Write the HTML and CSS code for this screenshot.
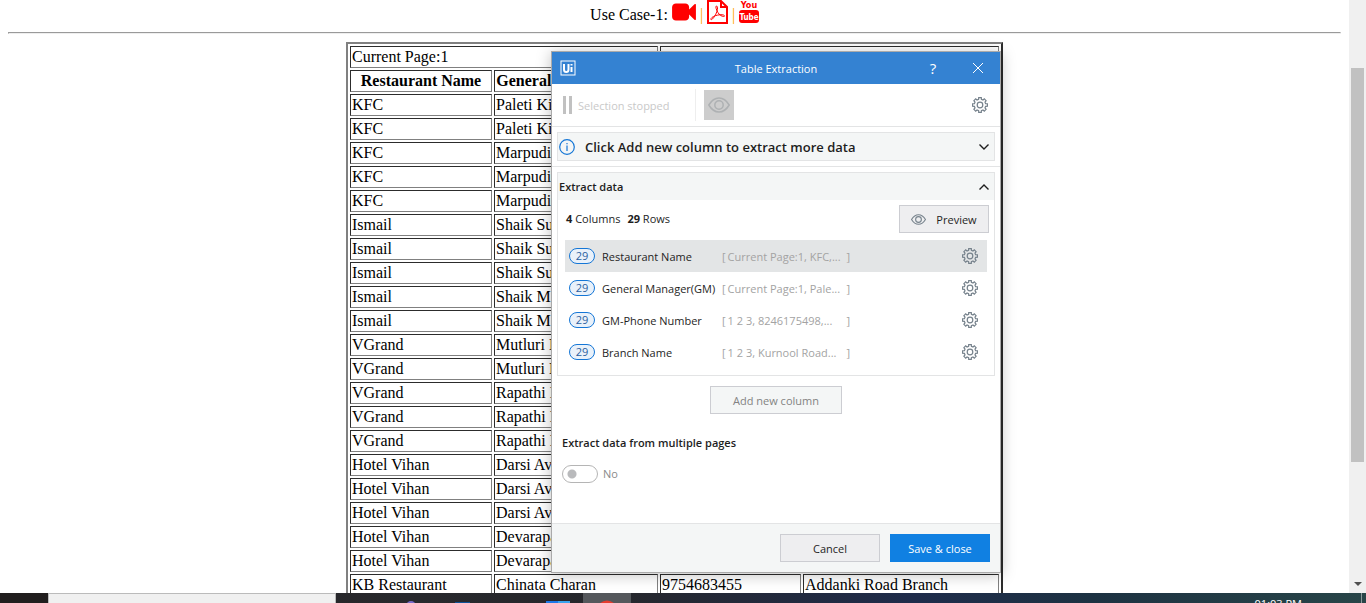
FILE: index.html
```html
<!DOCTYPE html>
<html lang="en">
<head>
<meta charset="utf-8">
<title>Table Extraction</title>
<link rel="stylesheet" href="styles.css">
</head>
<body>
<svg class="sprite" aria-hidden="true">
  <symbol id="gear" viewBox="0 0 16 16"><path d="M6.6 2.4 6.7.6H9.3L9.4 2.4 11 3 12.3 1.9 14.1 3.7 13 5 13.6 6.6 15.4 6.7V9.3L13.6 9.4 13 11 14.1 12.3 12.3 14.1 11 13 9.4 13.6 9.3 15.4H6.7L6.6 13.6 5 13 3.7 14.1 1.9 12.3 3 11 2.4 9.4.6 9.3V6.7L2.4 6.6 3 5 1.9 3.7 3.7 1.9 5 3Z"/><circle cx="8" cy="8" r="2.8"/></symbol>
  <symbol id="eye" viewBox="0 0 22 16"><path d="M.8 8Q5 1 11 1T21.2 8Q17 15 11 15T.8 8Z"/><circle cx="11" cy="8" r="4.2"/></symbol>
</svg>
<div class="screen">
  <div class="browser">
    <main class="page">
      <div class="links">
        <span>Use Case-1:</span>
        <a href="#video" aria-label="Video"><svg class="i-video" viewBox="0 144 1792 1504"><path d="M1792 352v1088q0 42-39 59-13 5-25 5-27 0-45-19l-403-403v166q0 119-84.5 203.5t-203.5 84.5h-704q-119 0-203.5-84.5t-84.5-203.5v-704q0-119 84.500-203.500t203.500-84.500h704q119 0 203.500 84.500t84.500 203.500v165l403-402q18-19 45-19 12 0 25 5 39 17 39 59z"/></svg></a>
        <span class="sep">|</span>
        <a href="#pdf" aria-label="PDF"><svg class="i-pdf" viewBox="0 0 21 24"><path d="M1 1H14L20 7V23H1ZM14 1V7H20"/><path class="thin" d="M9.500 6C8 6 9.500 11 12 14C14 16.500 17.500 17 17.500 16C17.500 14 10 14.500 6.500 16.500C3.500 18 3.300 20 4.500 19.600C7 18.500 10.500 12 10.500 8C10.500 6.800 10 6 9.500 6Z"/></svg></a>
        <span class="sep">|</span>
        <a href="#youtube" aria-label="YouTube"><svg class="i-yt" viewBox="0 0 20 25"><text class="you" x="10" y="8">You</text><rect x="0" y="10" width="20" height="13" rx="3"/><text class="tube" x="10" y="20">Tube</text></svg></a>
      </div>
      <hr>
      <table class="staff">
        <colgroup><col class="c1"><col class="c2"><col class="c3"><col class="c4"></colgroup>
        <tbody>
        <tr><td colspan="2">Current Page:1</td><td colspan="2"></td></tr>
        <tr><th>Restaurant Name</th><th>General Manager(GM)</th><th></th><th></th></tr>
        <tr><td>KFC</td><td>Paleti Ki</td><td></td><td></td></tr>
        <tr><td>KFC</td><td>Paleti Ki</td><td></td><td></td></tr>
        <tr><td>KFC</td><td>Marpudi</td><td></td><td></td></tr>
        <tr><td>KFC</td><td>Marpudi</td><td></td><td></td></tr>
        <tr><td>KFC</td><td>Marpudi</td><td></td><td></td></tr>
        <tr><td>Ismail</td><td>Shaik Su</td><td></td><td></td></tr>
        <tr><td>Ismail</td><td>Shaik Su</td><td></td><td></td></tr>
        <tr><td>Ismail</td><td>Shaik Su</td><td></td><td></td></tr>
        <tr><td>Ismail</td><td>Shaik M</td><td></td><td></td></tr>
        <tr><td>Ismail</td><td>Shaik M</td><td></td><td></td></tr>
        <tr><td>VGrand</td><td>Mutluri N</td><td></td><td></td></tr>
        <tr><td>VGrand</td><td>Mutluri N</td><td></td><td></td></tr>
        <tr><td>VGrand</td><td>Rapathi N</td><td></td><td></td></tr>
        <tr><td>VGrand</td><td>Rapathi N</td><td></td><td></td></tr>
        <tr><td>VGrand</td><td>Rapathi N</td><td></td><td></td></tr>
        <tr><td>Hotel Vihan</td><td>Darsi Av</td><td></td><td></td></tr>
        <tr><td>Hotel Vihan</td><td>Darsi Av</td><td></td><td></td></tr>
        <tr><td>Hotel Vihan</td><td>Darsi Av</td><td></td><td></td></tr>
        <tr><td>Hotel Vihan</td><td>Devarapa</td><td></td><td></td></tr>
        <tr><td>Hotel Vihan</td><td>Devarapa</td><td></td><td></td></tr>
        <tr><td>KB Restaurant</td><td>Chinata Charan</td><td>9754683455</td><td>Addanki Road Branch</td></tr>
        </tbody>
      </table>
    </main>
    <div class="scrollbar"><div class="thumb"></div><svg class="down" viewBox="0 0 8 4"><path d="M0 0H8L4 4Z"/></svg></div>
  </div>

  <footer class="taskbar">
    <div class="start"></div>
    <div class="search"></div>
    <div class="apps">
      <svg viewBox="0 0 300 10"><rect x="247" width="48" height="10" fill="#55585c"/><circle cx="75" cy="13" r="5" fill="#7669c8"/><rect x="119" y="9" width="15" height="4" fill="#0d5298"/><path d="M210 8H234V10H210Z" fill="#1c78e8"/><path d="M222 8H234V10H222Z" fill="#38a4ee"/><circle cx="271" cy="18" r="10.500" fill="#e63b2e"/></svg>
    </div>
    <div class="clock">01:03 PM</div>
  </footer>

  <section class="dialog" role="dialog" aria-labelledby="dlg-title">
    <header class="titlebar">
      <svg class="logo" viewBox="0 0 16 16"><rect x="1" y="1" width="14" height="14"/><path d="M4 4V9.500Q4 12 6.250 12T8.500 9.500V4M11.500 7V12M11.500 4V5.500"/></svg>
      <h1 id="dlg-title">Table Extraction</h1>
      <button class="help" aria-label="Help">?</button>
      <button aria-label="Close"><svg class="close" viewBox="0 0 12 12"><path d="M1 1 11 11M11 1 1 11"/></svg></button>
    </header>
    <div class="toolbar">
      <span class="pause"></span><span class="stopped">Selection stopped</span>
      <button class="view" aria-label="Highlight"><svg><use href="#eye"/></svg></button>
      <button class="gear" aria-label="Settings"><svg><use href="#gear"/></svg></button>
    </div>
    <div class="info-wrap">
      <button class="info">
        <svg class="i-info" viewBox="0 0 16 16"><circle cx="8" cy="8" r="7.300"/><path d="M8 6.500V12M8 4V5.300"/></svg>
        <span>Click Add new column to extract more data</span>
        <svg class="chev" viewBox="0 0 10 6"><path d="M.5.5 5 5 9.500.5"/></svg>
      </button>
    </div>
    <div class="content">
      <div class="group">
        <button class="group-head"><span>Extract data</span><svg class="chev" viewBox="0 0 10 6"><path d="M.5 5.500 5 1 9.500 5.500"/></svg></button>
        <div class="stats"><span><b>4</b> Columns</span><span><b>29</b> Rows</span><button class="btn preview"><svg><use href="#eye"/></svg>Preview</button></div>
        <ul class="cols">
          <li class="on"><span class="pill">29</span><span class="name">Restaurant Name</span><span class="ex"><i>[</i><span>Current Page:1, KFC,...</span><i>]</i></span><button class="gear" aria-label="Restaurant Name settings"><svg><use href="#gear"/></svg></button></li>
          <li><span class="pill">29</span><span class="name">General Manager(GM)</span><span class="ex"><i>[</i><span>Current Page:1, Pale...</span><i>]</i></span><button class="gear" aria-label="General Manager settings"><svg><use href="#gear"/></svg></button></li>
          <li><span class="pill">29</span><span class="name">GM-Phone Number</span><span class="ex"><i>[</i><span>1 2 3, 8246175498,...</span><i>]</i></span><button class="gear" aria-label="Phone settings"><svg><use href="#gear"/></svg></button></li>
          <li><span class="pill">29</span><span class="name">Branch Name</span><span class="ex"><i>[</i><span>1 2 3, Kurnool Road...</span><i>]</i></span><button class="gear" aria-label="Branch settings"><svg><use href="#gear"/></svg></button></li>
        </ul>
      </div>
      <button class="btn add" disabled>Add new column</button>
      <h2>Extract data from multiple pages</h2>
      <label class="toggle"><input type="checkbox" aria-label="Extract data from multiple pages"><span>No</span></label>
    </div>
    <div class="actions"><button class="btn">Cancel</button><button class="btn primary">Save &amp; close</button></div>
  </section>
</div>
</body>
</html>
```
FILE: styles.css
```css
* { box-sizing: border-box; }
body { margin: 0; background: #fff; }
.sprite { display: none; }
svg { display: block; fill: none; }
button { font: inherit; color: inherit; border: 0; padding: 0; background: none; }

.screen { position: relative; height: 100vh; display: flex; flex-direction: column; overflow: hidden; }
.browser { flex: 1; min-height: 0; display: flex; }
.page { flex: 1; padding: 0 8px; overflow: hidden; font: 16px/18px "Liberation Serif", serif; color: #000; }

.links { display: flex; justify-content: center; height: 32px; gap: 4px; padding-top: 6px; }
.links a { color: red; margin-top: -6px; }
.links .sep { color: orange; width: 3px; }
.i-video { width: 24px; height: 20px; margin-top: 2px; fill: red; }
.i-pdf { width: 21px; height: 24px; stroke: red; stroke-width: 2; }
.i-pdf .thin { stroke-width: 1; }
.i-yt { width: 20px; height: 25px; fill: red; }
.i-yt text { font-family: "Liberation Sans Narrow", "DejaVu Sans Condensed", sans-serif; font-weight: bold; text-anchor: middle; }
.you { font-size: 9px; }
.tube { font-size: 8px; fill: #fff; }
hr { margin: 0 0 8px; border: 1px solid; border-color: #9a9a9a #eee #eee #9a9a9a; }

.staff { table-layout: fixed; width: 657px; margin: 0 auto; border: 2px solid; border-color: #808080 #2c2c2c #2c2c2c #808080; border-spacing: 2px; }
.staff td, .staff th { height: 22px; padding: 1px; border: 1px solid; border-color: #2c2c2c #808080 #808080 #2c2c2c; white-space: nowrap; }
.c1 { width: 142px; }
.c2 { width: 164px; }
.c3 { width: 141px; }
.c4 { width: 196px; }

.scrollbar { width: 17px; padding: 68px 2px 7px; background: #f0f0f0; display: flex; flex-direction: column; justify-content: space-between; align-items: center; }
.thumb { width: 13px; height: 76%; background: #c1c1c1; }
.down { width: 8px; height: 4px; fill: #505050; }

.taskbar { height: 10px; display: flex; overflow: hidden; background: linear-gradient(90deg, #231f1f, #28292d 30%, #26272c 45%, #1f2c4b 67%, #1d3242 80%, #284548); }
.start { width: 48px; background: #211e1e; }
.search { width: 288px; background: #f0f0f0; border: 1px solid #bbb; border-bottom: 0; }
.apps { flex: 1; }
.apps svg { width: 300px; height: 10px; }
.clock { padding: 3px 59px 0 0; margin-right: 4px; border-right: 1px solid #8b999b; font: 11px/16px "Open Sans", sans-serif; color: #fff; }

.dialog { position: absolute; left: 551px; top: 51px; width: 450px; border: 1px solid #aaa; background: #fff; box-shadow: 0 2px 14px rgba(0, 0, 0, .25); font: 11px/16px "Open Sans", sans-serif; color: #1e1e1e; }
.titlebar { display: grid; grid-template-columns: 32px 1fr 44px 44px; align-items: center; justify-items: center; height: 32px; background: #3482d2; color: #fff; }
.titlebar h1 { margin: 2px 0 0 56px; font-size: 11px; font-weight: 400; }
.help { font-size: 15px; padding-right: 2px; }
.logo { width: 16px; height: 16px; stroke: #fff; stroke-width: 2; }
.logo rect { stroke-width: 1; }
.close { width: 12px; height: 12px; stroke: #fff; }
.toolbar { display: flex; align-items: center; height: 43px; padding: 0 12px 0 11px; border-bottom: 1px solid #e3e4e5; color: #c9c9c9; }
.pause { width: 9px; height: 18px; border: solid #c1c1c1; border-width: 0 3px; }
.stopped { width: 118px; margin: 0 8px 0 6px; padding: 9px 0 7px; border-right: 1px solid #eee; white-space: nowrap; }
.view { width: 30px; height: 30px; background: #cdcdcd; stroke: #aeb1b3; stroke-width: 1.5; }
.view svg { width: 22px; height: 16px; margin: auto; }
.gear { margin-left: auto; stroke: #76828c; stroke-width: 1.2; }
.gear svg { width: 16px; height: 16px; }
.info-wrap { padding: 5px; border-bottom: 1px solid #e3e4e5; }
.info { display: flex; align-items: center; gap: 10px; width: 100%; height: 29px; padding: 0 5px 0 1px; border: 1px solid #e3e4e5; background: #f4f6f6; font-size: 13px; font-weight: 600; }
.i-info { width: 16px; height: 16px; stroke: #1476d6; stroke-width: 1.2; }
.chev { width: 10px; height: 6px; margin-left: auto; stroke: #1e1e1e; stroke-width: 1.4; }

.content { padding: 5px; min-height: 356px; display: flex; flex-direction: column; align-items: flex-start; }
.group { width: 100%; border: 1px solid #e3e4e5; padding-bottom: 7px; }
.group-head { display: flex; align-items: center; width: 100%; height: 27px; padding: 0 5px 0 1px; background: #f4f6f6; font-weight: 600; }
.stats { display: flex; align-items: center; gap: 7px; padding: 5px 5px 7px 8px; }
.btn { display: flex; align-items: center; justify-content: center; width: 100px; height: 28px; padding-top: 1px; border: 1px solid #cccdd2; background: #eeeef0; }
.preview { width: 90px; margin-left: auto; gap: 10px; }
.preview svg { width: 15px; height: 11px; stroke: #76828c; stroke-width: 1.6; }
.cols { list-style: none; margin: 0 7px; padding: 0; }
.cols li { display: grid; grid-template-columns: 26px 127px 128px 1fr; align-items: center; height: 32px; padding: 0 9px 0 4px; white-space: nowrap; }
.cols .name { padding: 1px 0 0 7px; }
.cols .on { background: #e3e5e6; }
.pill { height: 16px; border: 1px solid #1476d6; border-radius: 8px; background: #e9f1fa; color: #2c5fa0; text-align: center; line-height: 14px; }
.ex { display: flex; gap: 2px; padding-top: 1px; color: #a3a3a3; }
.ex i { font-style: normal; }
.ex i:last-child { margin-left: auto; }
.add { width: 132px; margin: 10px auto 0; background: #f4f6f6; color: #838383; }
h2 { margin: 21px 5px 14px; font-size: 11px; line-height: 16px; font-weight: 600; }
.toggle { display: flex; align-items: center; gap: 5px; margin-left: 5px; color: #8a8a8a; }
.toggle input { appearance: none; width: 36px; height: 18px; margin: 0; border: 1px solid #b5b5b5; border-radius: 9px; background: radial-gradient(circle at 9px 8px, #b9babc 4px, #fff 5px); }
.actions { display: flex; justify-content: flex-end; gap: 10px; padding: 10px; border-top: 1px solid #e3e4e5; background: #f4f6f6; }
.primary { border-color: #1080e2; background: #1080e2; color: #fff; }
```
